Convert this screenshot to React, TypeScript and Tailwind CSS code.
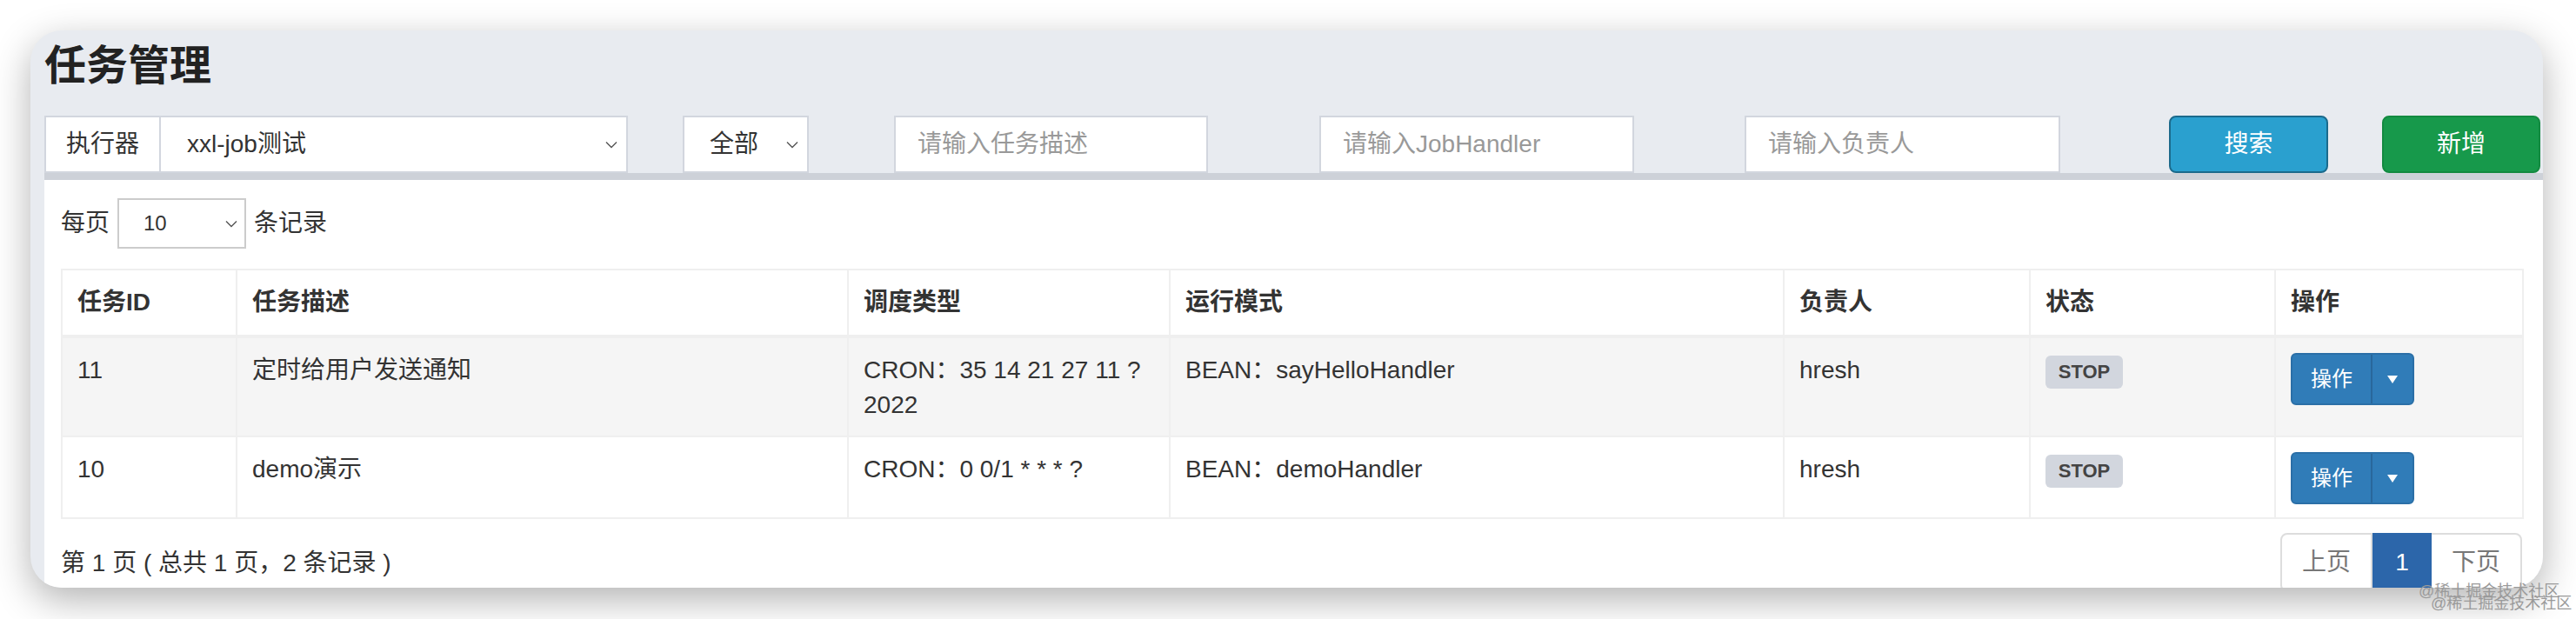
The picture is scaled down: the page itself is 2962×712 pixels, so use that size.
import React from "react";

function Chevron() {
  return (
    <svg width="14" height="9" viewBox="0 0 14 9" fill="none" className="shrink-0">
      <path d="M1 1.5 L7 7.5 L13 1.5" stroke="#555" strokeWidth="1.4" />
    </svg>
  );
}

function Caret() {
  return (
    <svg width="12" height="9" viewBox="0 0 12 9" className="shrink-0">
      <polygon points="0,0 12,0 6,9" fill="#fff" />
    </svg>
  );
}

function ActionButton() {
  return (
    <div className="flex w-[142px] h-[60px] rounded-[6px] border-2 border-[#2b6fa7] bg-[#307cb8] text-white overflow-hidden">
      <div className="w-[90px] flex items-center justify-center text-[24px]">操作</div>
      <div className="flex-1 flex items-center justify-center border-l-2 border-[#29679c]">
        <Caret />
      </div>
    </div>
  );
}

function Badge() {
  return (
    <div className="pt-[3px]">
      <div className="flex items-center justify-center h-[38px] w-[89px] rounded-[6px] bg-[#d2d6de] text-[#444] text-[22px] leading-none font-bold">
        STOP
      </div>
    </div>
  );
}

const cols = [201, 703, 370, 706, 283, 282, 285];

export default function App() {
  const th = "border-2 border-[#efefef] border-b-[4px] px-[17px] pt-[17px] pb-[17px] text-left font-bold text-[28px] leading-[40px] align-top";
  const td = "border-2 border-[#efefef] px-[17px] pt-[17px] pb-[15px] text-[28px] leading-[40px] align-top";
  return (
    <div className="relative w-[2962px] h-[712px] overflow-hidden bg-white pl-[35px] pt-[35px] font-['Liberation_Sans','Noto_Sans_CJK_SC',sans-serif] text-[#333]">
      <div className="w-[2889px] h-[641px] rounded-[36px] overflow-hidden bg-[#e8ebf0] shadow-[0_14px_44px_rgba(0,0,0,0.30)] pl-[16px] flex flex-col">
        <h1 className="shrink-0 mt-[14px] text-[48px] leading-[53px] font-bold text-[#222]">任务管理</h1>
        <div className="shrink-0 mt-[31px] flex h-[66px] text-[28px]">
          <div className="flex w-[671px] h-full">
            <div className="w-[134px] border-2 border-[#d2d6de] bg-white flex items-center justify-center">执行器</div>
            <div className="flex-1 border-2 border-l-0 border-[#d2d6de] bg-white flex items-center pl-[30px] pr-[10px]">
              <span className="flex-1">xxl-job测试</span>
              <Chevron />
            </div>
          </div>
          <div className="ml-[63px] w-[145px] h-full border-2 border-[#d2d6de] bg-white flex items-center pl-[29px] pr-[10px]">
            <span className="flex-1">全部</span>
            <Chevron />
          </div>
          <input
            className="ml-[98px] w-[361px] h-full border-2 border-[#d2d6de] bg-white pl-[25px] outline-none placeholder:text-[#999]"
            placeholder="请输入任务描述"
          />
          <input
            className="ml-[128px] w-[362px] h-full border-2 border-[#d2d6de] bg-white pl-[25px] outline-none placeholder:text-[#999]"
            placeholder="请输入JobHandler"
          />
          <input
            className="ml-[127px] w-[363px] h-full border-2 border-[#d2d6de] bg-white pl-[25px] outline-none placeholder:text-[#999]"
            placeholder="请输入负责人"
          />
          <button className="ml-[125px] w-[183px] h-full rounded-[8px] border-2 border-[#1b6a8c] bg-[#2aa0cf] text-white">
            搜索
          </button>
          <button className="ml-[62px] w-[182px] h-full rounded-[8px] border-2 border-[#138a40] bg-[#17994b] text-white">
            新增
          </button>
        </div>
        <div className="shrink-0 bg-white border-t-[8px] border-[#cdd1d8] px-[19px] pt-[21px]">
          <div className="flex items-center h-[58px] text-[28px]">
            <span>每页</span>
            <div className="ml-[9px] w-[148px] h-[58px] border-2 border-[#ccc] flex items-center pl-[28px] pr-[8px] text-[24px]">
              <span className="flex-1">10</span>
              <Chevron />
            </div>
            <span className="ml-[9px]">条记录</span>
          </div>
          <table className="mt-[23px] w-[2830px] border-collapse table-fixed">
            <colgroup>
              {cols.map((w, i) => (
                <col key={i} style={{ width: w }} />
              ))}
            </colgroup>
            <thead>
              <tr>
                <th className={th}>任务ID</th>
                <th className={th}>任务描述</th>
                <th className={th}>调度类型</th>
                <th className={th}>运行模式</th>
                <th className={th}>负责人</th>
                <th className={th}>状态</th>
                <th className={th}>操作</th>
              </tr>
            </thead>
            <tbody>
              <tr className="bg-[#f5f5f5]">
                <td className={td}>11</td>
                <td className={td}>定时给用户发送通知</td>
                <td className={td}>CRON：35 14 21 27 11 ? 2022</td>
                <td className={td}>BEAN：sayHelloHandler</td>
                <td className={td}>hresh</td>
                <td className={td}>
                  <Badge />
                </td>
                <td className={td}>
                  <ActionButton />
                </td>
              </tr>
              <tr>
                <td className={td}>10</td>
                <td className={td}>demo演示</td>
                <td className={td}>CRON：0 0/1 * * * ?</td>
                <td className={td}>BEAN：demoHandler</td>
                <td className={td}>hresh</td>
                <td className={td}>
                  <Badge />
                </td>
                <td className={td}>
                  <ActionButton />
                </td>
              </tr>
            </tbody>
          </table>
          <div className="mt-[16px] w-[2830px] flex items-start justify-between text-[28px]">
            <span className="mt-[14px]">第 1 页 ( 总共 1 页，2 条记录 )</span>
            <div className="flex h-[68px]">
              <div className="w-[106px] border-2 border-[#ddd] rounded-l-[8px] flex items-center justify-center text-[#777]">上页</div>
              <div className="w-[68px] bg-[#2c66aa] border-2 border-[#2c66aa] flex items-center justify-center text-white">1</div>
              <div className="w-[104px] border-2 border-l-0 border-[#ddd] rounded-r-[8px] flex items-center justify-center text-[#777]">下页</div>
            </div>
          </div>
        </div>
      </div>
      <div className="absolute left-[2781px] top-[670px] text-[18px] leading-[21px] text-[#9a9a9a] whitespace-nowrap">@稀土掘金技术社区</div>
      <div className="absolute left-[2795px] top-[684px] text-[18px] leading-[21px] text-[#9a9a9a] whitespace-nowrap">@稀土掘金技术社区</div>
    </div>
  );
}
